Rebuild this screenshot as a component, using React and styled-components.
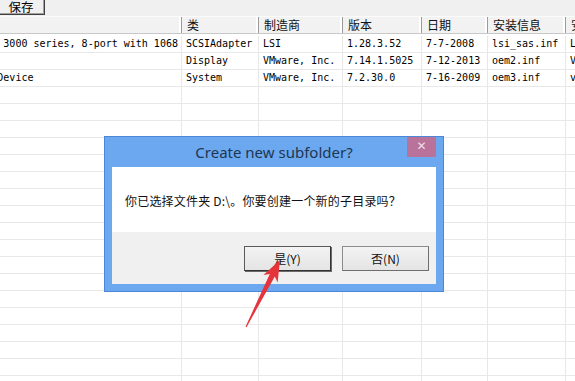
import React from 'react'
import styled, { createGlobalStyle } from 'styled-components'

const COLUMNS = '284px 77px 84px 79px 66px 78px 80px'
const EMPTY_ROWS = 18

const headers = ['', '类', '制造商', '版本', '日期', '安装信息', '安装部分']

const devices = [
  ['LSI Adapter, SAS 3000 series, 8-port with 1068', 'SCSIAdapter', 'LSI', '1.28.3.52', '7-7-2008', 'lsi_sas.inf', 'LSI_SAS'],
  ['VMware SVGA 3D', 'Display', 'VMware, Inc.', '7.14.1.5025', '7-12-2013', 'oem2.inf', 'VMware'],
  ['VMware VMCI Bus Device', 'System', 'VMware, Inc.', '7.2.30.0', '7-16-2009', 'oem3.inf', 'vmci']
]

const GlobalStyle = createGlobalStyle`
  html, body {
    margin: 0;
    padding: 0;
    background: #fff;
  }
  body {
    font-family: "Noto Sans", "Noto Sans CJK SC", sans-serif;
  }
`

const Screen = styled.div`
  position: relative;
  width: 575px;
  height: 381px;
  overflow: hidden;
  background: #fff;
`

const Toolbar = styled.div`
  height: 16px;
  background: #f0f0f0;
  display: flex;
  align-items: flex-start;
`

const SaveButton = styled.button`
  margin: -3px 0 0 -4px;
  width: 49px;
  height: 18px;
  padding: 1px 0 0 1px;
  box-sizing: border-box;
  background: #f0f0f0;
  border: 1px solid #fff;
  border-right-color: #404040;
  border-bottom-color: #404040;
  box-shadow: inset -1px -1px 0 #a0a0a0;
  font-family: "Noto Sans CJK SC", sans-serif;
  font-size: 12.5px;
  line-height: 14px;
  color: #000;
`

const ListView = styled.div`
  margin-left: -102px;
`

const HeaderRow = styled.div`
  display: grid;
  grid-template-columns: ${COLUMNS};
  height: 18px;
  box-sizing: border-box;
  background: #f2f2f2;
  border-top: 1px solid #fbfbfb;
  border-bottom: 1px solid #c8c8c8;
`

const HeaderCell = styled.div`
  padding-left: ${p => (p.first ? 3 : 5)}px;
  border-right: 1px solid #9a9a9a;
  box-shadow: inset -2px 0 0 #fff;
  font-family: "Noto Sans CJK SC", sans-serif;
  font-size: 12px;
  line-height: 16px;
  color: #111;
  white-space: nowrap;
  overflow: hidden;
`

const Body = styled.div`
  padding-top: 2px;
`

const Row = styled.div`
  display: grid;
  grid-template-columns: ${COLUMNS};
  height: 17px;
  box-sizing: border-box;
  border-bottom: 1px solid #e8e8e8;
`

const Cell = styled.div`
  padding-left: ${p => (p.first ? 3 : 4)}px;
  border-right: 1px solid #e8e8e8;
  font-family: "DejaVu Sans Mono", "Liberation Mono", monospace;
  font-size: 10px;
  line-height: 16px;
  color: #000;
  white-space: nowrap;
  overflow: hidden;
`

const Dialog = styled.div`
  position: absolute;
  left: 104px;
  top: 136px;
  width: 340px;
  height: 156px;
  box-sizing: border-box;
  padding: 0 7px 7px 7px;
  background: #6ca8ef;
  border: 1px solid #4b87d6;
  display: flex;
  flex-direction: column;
`

const TitleBar = styled.div`
  height: 30px;
  display: grid;
  grid-template-columns: 29px 1fr 29px;
  align-items: start;
`

const Title = styled.div`
  height: 30px;
  line-height: 30px;
  text-align: center;
  font-family: "Noto Sans", "Open Sans", sans-serif;
  font-size: 15px;
  color: #1d3652;
`

const CloseButton = styled.div`
  width: 29px;
  height: 20px;
  background: #b9729a;
  color: #f4dce8;
  font-family: "DejaVu Sans", sans-serif;
  font-size: 12px;
  line-height: 19px;
  text-align: center;
`

const Client = styled.div`
  flex: 1;
  display: flex;
  flex-direction: column;
  background: #fff;
`

const Message = styled.div`
  height: 65px;
  box-sizing: border-box;
  padding: 25px 0 0 13px;
  font-family: "Noto Sans CJK SC", sans-serif;
  font-size: 12px;
  letter-spacing: 0.2px;
  line-height: 17px;
  color: #111;
`

const ButtonBar = styled.div`
  flex: 1;
  display: flex;
  justify-content: flex-end;
  gap: 11px;
  padding: 14px 7px 0 0;
  background: #f0f0f0;
`

const DialogButton = styled.button`
  width: 87px;
  height: 25px;
  box-sizing: border-box;
  padding: 0;
  background: linear-gradient(#f3f3f3, #e4e4e4);
  border: 1px solid ${p => (p.primary ? '#5a5a5a' : '#8c8c8c')};
  border-right-color: ${p => (p.primary ? '#333' : '#6e6e6e')};
  border-bottom-color: ${p => (p.primary ? '#333' : '#6e6e6e')};
  box-shadow: ${p => (p.primary ? '1px 1px 0 #6a6a6a' : 'none')};
  font-family: "Noto Sans CJK SC", sans-serif;
  font-size: 12px;
  line-height: 22px;
  color: #111;
`

const Arrow = styled.svg`
  position: absolute;
  left: 240px;
  top: 255px;
`

function App() {
  const blanks = Array.from({ length: EMPTY_ROWS }, () => headers.map(() => ''))

  return (
    <Screen>
      <GlobalStyle />
      <Toolbar>
        <SaveButton>保存</SaveButton>
      </Toolbar>

      <ListView>
        <HeaderRow>
          {headers.map((h, i) => (
            <HeaderCell key={i} first={i === 0}>{h}</HeaderCell>
          ))}
        </HeaderRow>
        <Body>
          {[...devices, ...blanks].map((row, r) => (
            <Row key={r}>
              {row.map((value, c) => (
                <Cell key={c} first={c === 0}>{value}</Cell>
              ))}
            </Row>
          ))}
        </Body>
      </ListView>

      <Dialog>
        <TitleBar>
          <span />
          <Title>Create new subfolder?</Title>
          <CloseButton>✕</CloseButton>
        </TitleBar>
        <Client>
          <Message>你已选择文件夹 D:\。你要创建一个新的子目录吗？</Message>
          <ButtonBar>
            <DialogButton primary>是(Y)</DialogButton>
            <DialogButton>否(N)</DialogButton>
          </ButtonBar>
        </Client>
      </Dialog>

      <Arrow width="50" height="80" viewBox="0 0 50 80">
        <polygon
          points="40,5 37.6,27.4 34.8,21.4 6.5,72.3 5.5,71.7 29.8,18.9 23.4,20.1"
          fill="#e6343c"
        />
      </Arrow>
    </Screen>
  )
}

export default App
